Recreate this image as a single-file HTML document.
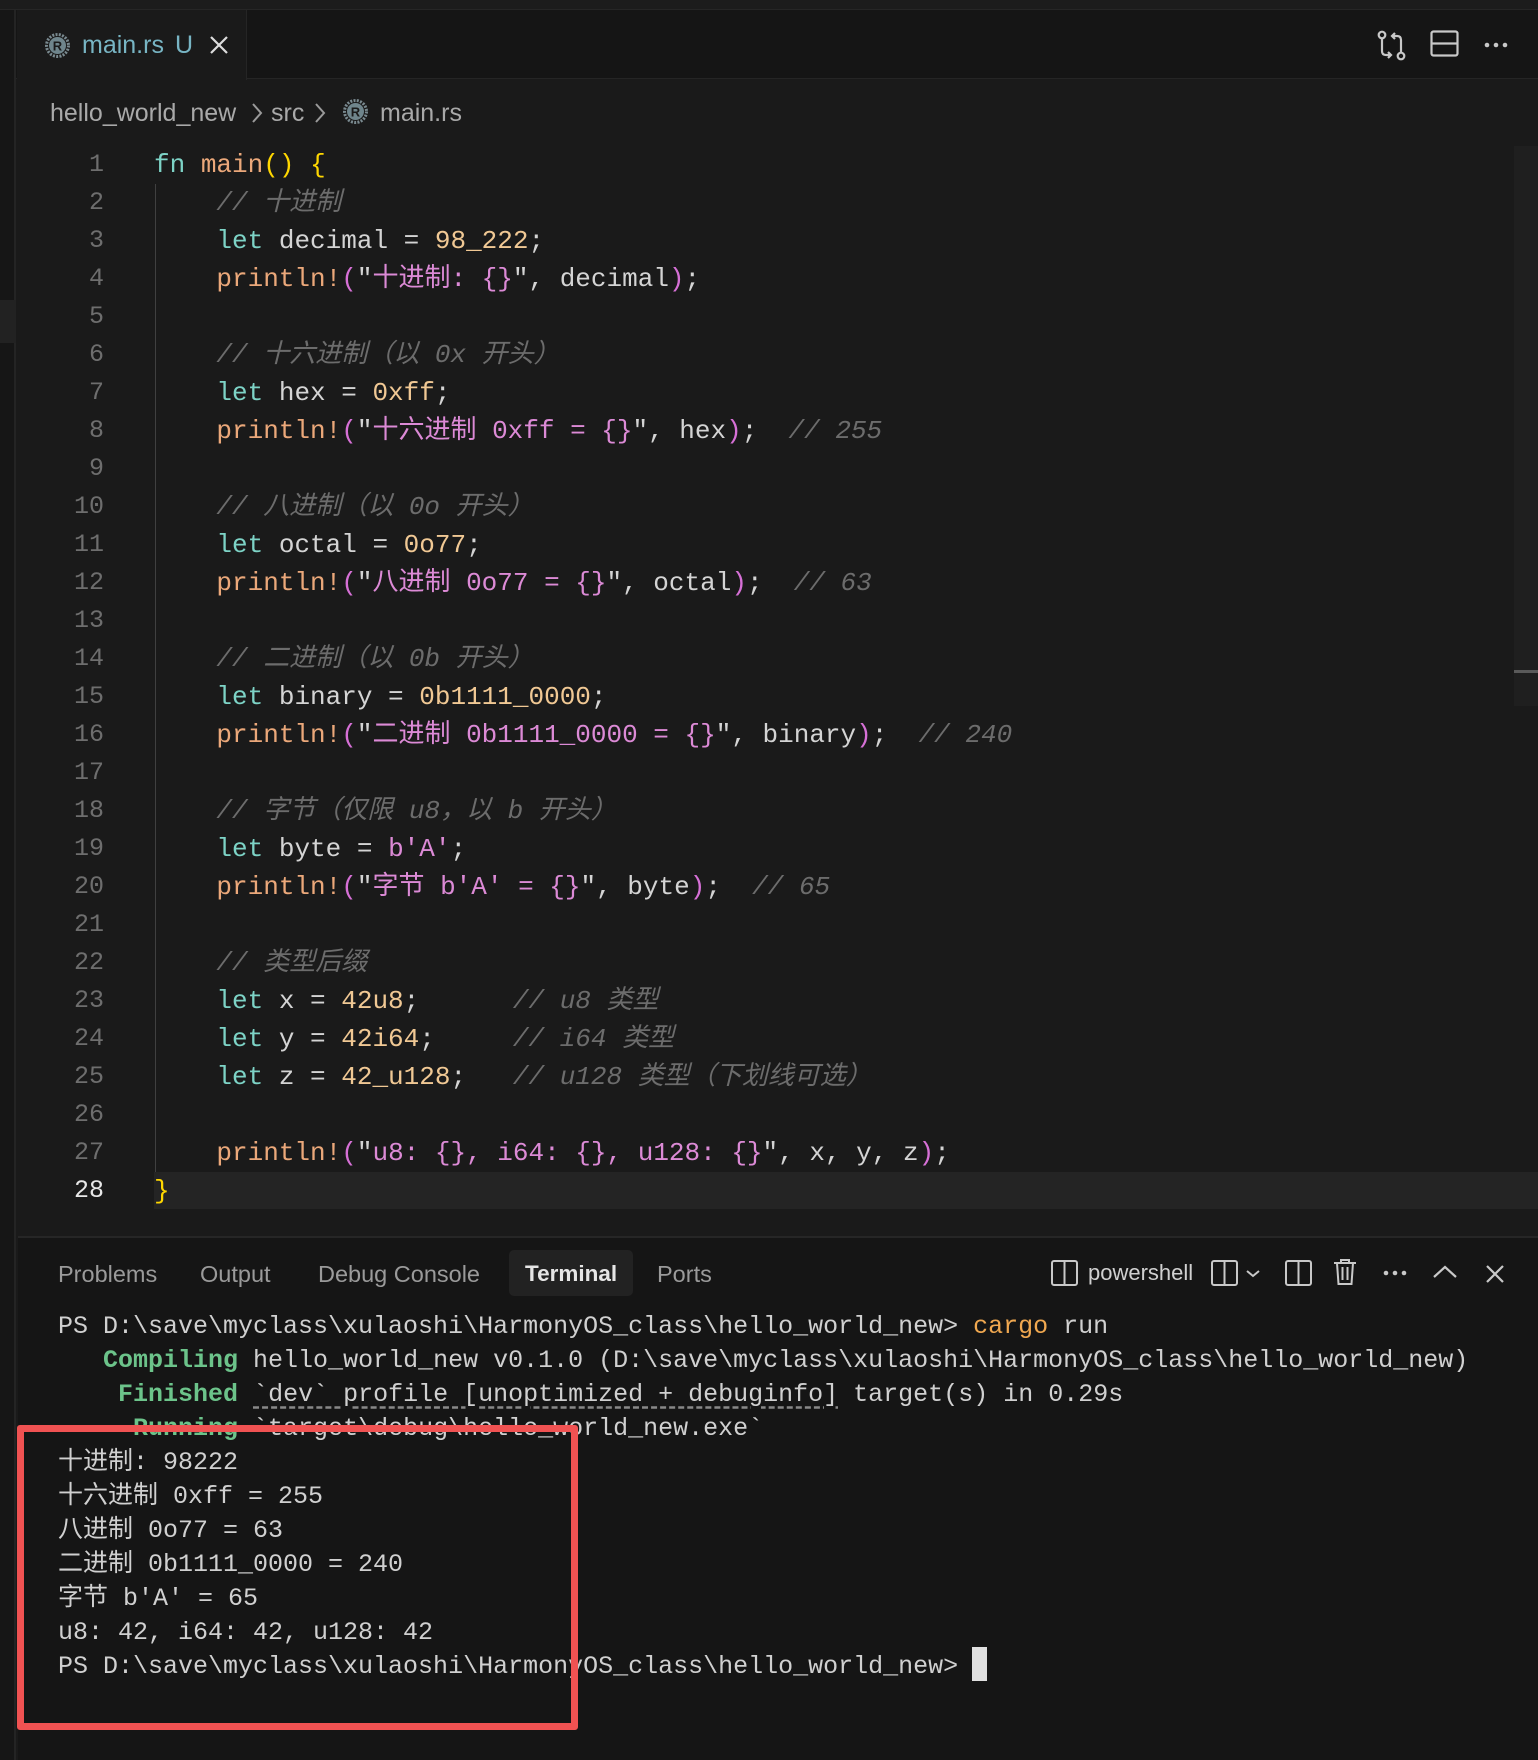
<!DOCTYPE html>
<html><head><meta charset="utf-8"><style>
*{margin:0;padding:0;box-sizing:border-box}
body{width:1538px;height:1760px;background:#1a1a1a;position:relative;overflow:hidden;font-family:"Liberation Sans","Noto Sans CJK SC",sans-serif}
.abs{position:absolute}
.code{position:absolute;left:0;width:1538px;height:38px;line-height:38px;font-family:"Liberation Mono","Noto Sans CJK SC",monospace;font-size:26px;white-space:pre;color:#d4d4d4}
.ln{position:absolute;width:104px;text-align:right;left:0;color:#6e6e6e;font-size:25px}
.tx{position:absolute;left:154px}
.k{color:#7dd3c6}.f{color:#eba87a}.n{color:#f0c894}.s{color:#dc8ad6}.p1{color:#ffd700}.p2{color:#d670d6}.c{color:#6c6c6c;font-style:italic}
.t{position:absolute;left:58px;height:34px;line-height:34px;font-family:"Liberation Mono","Noto Sans CJK SC",monospace;font-size:25px;white-space:pre;color:#d0d0d0}
.g{color:#6cc38a;font-weight:bold}
.ptab{position:absolute;top:1259px;font-size:23.5px;color:#9a9a9a;line-height:30px}
.bc{position:absolute;top:97px;font-size:25px;color:#a9a9a9;line-height:32px;white-space:pre}
</style></head><body>
<div class="abs" style="left:0;top:0;width:1538px;height:10px;background:#1c1c1c;border-bottom:1px solid #262626"></div>
<div class="abs" style="left:0;top:10px;width:1538px;height:69px;background:#151515;border-bottom:1px solid #252525"></div>
<div class="abs" style="left:17px;top:10px;width:230px;height:70px;background:#1a1a1a;border-right:1px solid #252525"></div>
<div class="abs" style="left:0;top:10px;width:16px;height:1750px;background:#161616;border-right:2px solid #242424"></div>
<div class="abs" style="left:0;top:300px;width:16px;height:43px;background:#222"></div>
<svg class="abs" style="left:44px;top:32px" width="27" height="27" viewBox="0 0 27 27"><circle cx="13.5" cy="13.5" r="11" fill="none" stroke="#7a8a90" stroke-width="3" stroke-dasharray="2 1.3"/><circle cx="13.5" cy="13.5" r="8.5" fill="#6f858c"/><text x="13.5" y="18.5" font-size="13" font-weight="bold" text-anchor="middle" fill="#1a1a1a" font-family="Liberation Sans">R</text></svg>
<div class="abs" style="left:82px;top:29px;font-size:25px;color:#78b5c4;line-height:32px">main.rs</div>
<div class="abs" style="left:175px;top:29px;font-size:25px;color:#78b5c4;line-height:32px">U</div>
<svg class="abs" style="left:209px;top:35px" width="20" height="20"><path d="M2 2L18 18M18 2L2 18" stroke="#dcdcdc" stroke-width="2.2"/></svg>
<svg class="abs" style="left:1375px;top:29px" width="34" height="34" viewBox="0 0 34 34" fill="none" stroke="#c8c8c8" stroke-width="2.2"><circle cx="7" cy="6" r="3.3"/><circle cx="26" cy="27" r="3.3"/><path d="M7 9.5V22q0 4 4 4h5M13 23l3 3-3 3M26 23.5V11q0-4-4-4h-5M20 4l-3 3 3 3"/></svg>
<svg class="abs" style="left:1430px;top:30px" width="30" height="28"><rect x="1.5" y="1.5" width="26" height="24" rx="2" fill="none" stroke="#c8c8c8" stroke-width="2.2"/><path d="M1.5 13.5h26" stroke="#c8c8c8" stroke-width="2.2"/></svg>
<svg class="abs" style="left:1484px;top:41px" width="24" height="8"><circle cx="3" cy="4" r="2.3" fill="#c8c8c8"/><circle cx="12" cy="4" r="2.3" fill="#c8c8c8"/><circle cx="21" cy="4" r="2.3" fill="#c8c8c8"/></svg>
<div class="bc" style="left:50px">hello_world_new</div>
<svg class="abs" style="left:250px;top:100px" width="14" height="26" fill="none" stroke="#9a9a9a" stroke-width="2"><path d="M3 4l8 9-8 9"/></svg>
<div class="bc" style="left:271px">src</div>
<svg class="abs" style="left:313px;top:100px" width="14" height="26" fill="none" stroke="#9a9a9a" stroke-width="2"><path d="M3 4l8 9-8 9"/></svg>
<svg class="abs" style="left:342px;top:98px" width="27" height="27" viewBox="0 0 27 27"><circle cx="13.5" cy="13.5" r="11" fill="none" stroke="#7a8a90" stroke-width="3" stroke-dasharray="2 1.3"/><circle cx="13.5" cy="13.5" r="8.5" fill="#6f858c"/><text x="13.5" y="18.5" font-size="13" font-weight="bold" text-anchor="middle" fill="#1a1a1a" font-family="Liberation Sans">R</text></svg>
<div class="bc" style="left:380px">main.rs</div>
<div class="abs" style="left:1514px;top:146px;width:24px;height:560px;background:#1f1f1f"></div>
<div class="abs" style="left:1514px;top:670px;width:24px;height:3px;background:#5a5a5a"></div>
<div class="abs" style="left:155px;top:184px;width:1px;height:988px;background:#404040"></div>
<div class="abs" style="left:154px;top:1172px;width:1384px;height:37px;background:#242424"></div>

<div class="code" style="top:146px"><span class="ln">1</span><span class="tx"><span class="k">fn</span> <span class="f">main</span><span class="p1">()</span> <span class="p1">{</span></span></div>
<div class="code" style="top:184px"><span class="ln">2</span><span class="tx">    <span class="c">// 十进制</span></span></div>
<div class="code" style="top:222px"><span class="ln">3</span><span class="tx">    <span class="k">let</span> decimal = <span class="n">98_222</span>;</span></div>
<div class="code" style="top:260px"><span class="ln">4</span><span class="tx">    <span class="f">println!</span><span class="p2">(</span>"<span class="s">十进制: {}</span>", decimal<span class="p2">)</span>;</span></div>
<div class="code" style="top:298px"><span class="ln">5</span></div>
<div class="code" style="top:336px"><span class="ln">6</span><span class="tx">    <span class="c">// 十六进制（以 0x 开头）</span></span></div>
<div class="code" style="top:374px"><span class="ln">7</span><span class="tx">    <span class="k">let</span> hex = <span class="n">0xff</span>;</span></div>
<div class="code" style="top:412px"><span class="ln">8</span><span class="tx">    <span class="f">println!</span><span class="p2">(</span>"<span class="s">十六进制 0xff = {}</span>", hex<span class="p2">)</span>;  <span class="c">// 255</span></span></div>
<div class="code" style="top:450px"><span class="ln">9</span></div>
<div class="code" style="top:488px"><span class="ln">10</span><span class="tx">    <span class="c">// 八进制（以 0o 开头）</span></span></div>
<div class="code" style="top:526px"><span class="ln">11</span><span class="tx">    <span class="k">let</span> octal = <span class="n">0o77</span>;</span></div>
<div class="code" style="top:564px"><span class="ln">12</span><span class="tx">    <span class="f">println!</span><span class="p2">(</span>"<span class="s">八进制 0o77 = {}</span>", octal<span class="p2">)</span>;  <span class="c">// 63</span></span></div>
<div class="code" style="top:602px"><span class="ln">13</span></div>
<div class="code" style="top:640px"><span class="ln">14</span><span class="tx">    <span class="c">// 二进制（以 0b 开头）</span></span></div>
<div class="code" style="top:678px"><span class="ln">15</span><span class="tx">    <span class="k">let</span> binary = <span class="n">0b1111_0000</span>;</span></div>
<div class="code" style="top:716px"><span class="ln">16</span><span class="tx">    <span class="f">println!</span><span class="p2">(</span>"<span class="s">二进制 0b1111_0000 = {}</span>", binary<span class="p2">)</span>;  <span class="c">// 240</span></span></div>
<div class="code" style="top:754px"><span class="ln">17</span></div>
<div class="code" style="top:792px"><span class="ln">18</span><span class="tx">    <span class="c">// 字节（仅限 u8，以 b 开头）</span></span></div>
<div class="code" style="top:830px"><span class="ln">19</span><span class="tx">    <span class="k">let</span> byte = <span class="s">b'A'</span>;</span></div>
<div class="code" style="top:868px"><span class="ln">20</span><span class="tx">    <span class="f">println!</span><span class="p2">(</span>"<span class="s">字节 b'A' = {}</span>", byte<span class="p2">)</span>;  <span class="c">// 65</span></span></div>
<div class="code" style="top:906px"><span class="ln">21</span></div>
<div class="code" style="top:944px"><span class="ln">22</span><span class="tx">    <span class="c">// 类型后缀</span></span></div>
<div class="code" style="top:982px"><span class="ln">23</span><span class="tx">    <span class="k">let</span> x = <span class="n">42u8</span>;      <span class="c">// u8 类型</span></span></div>
<div class="code" style="top:1020px"><span class="ln">24</span><span class="tx">    <span class="k">let</span> y = <span class="n">42i64</span>;     <span class="c">// i64 类型</span></span></div>
<div class="code" style="top:1058px"><span class="ln">25</span><span class="tx">    <span class="k">let</span> z = <span class="n">42_u128</span>;   <span class="c">// u128 类型（下划线可选）</span></span></div>
<div class="code" style="top:1096px"><span class="ln">26</span></div>
<div class="code" style="top:1134px"><span class="ln">27</span><span class="tx">    <span class="f">println!</span><span class="p2">(</span>"<span class="s">u8: {}, i64: {}, u128: {}</span>", x, y, z<span class="p2">)</span>;</span></div>
<div class="code" style="top:1172px"><span class="ln" style="color:#e8e8e8">28</span><span class="tx"><span class="p1">}</span></span></div>

<div class="abs" style="left:18px;top:1236px;width:1520px;height:524px;background:#151515;border-top:2px solid #262626"></div>
<div class="ptab" style="left:58px">Problems</div>
<div class="ptab" style="left:200px">Output</div>
<div class="ptab" style="left:318px">Debug Console</div>
<div class="abs" style="left:509px;top:1250px;width:124px;height:46px;background:#222;border-radius:5px"></div>
<div class="ptab" style="left:525px;color:#e6e6e6;font-weight:bold;font-size:22.5px">Terminal</div>
<div class="ptab" style="left:657px">Ports</div>
<svg class="abs" style="left:1050px;top:1258px" width="30" height="30" fill="none" stroke="#c8c8c8" stroke-width="2"><rect x="2" y="3" width="25" height="24" rx="2"/><path d="M14.5 3v24"/></svg>
<div class="abs" style="left:1088px;top:1258px;font-size:22px;color:#d0d0d0;line-height:30px">powershell</div>
<svg class="abs" style="left:1210px;top:1258px" width="54" height="30" fill="none" stroke="#c8c8c8" stroke-width="2"><rect x="2" y="3" width="25" height="24" rx="2"/><path d="M14.5 3v24M37 13l6 5 6-5"/></svg>
<svg class="abs" style="left:1284px;top:1258px" width="30" height="30" fill="none" stroke="#c8c8c8" stroke-width="2"><rect x="2" y="3" width="25" height="24" rx="2"/><path d="M14.5 3v24"/></svg>
<svg class="abs" style="left:1333px;top:1257px" width="24" height="30" fill="none" stroke="#c8c8c8" stroke-width="2"><path d="M1 6h22M8 6V3h8v3M4 6l1.5 21h13L20 6M9.5 10v13M14.5 10v13"/></svg>
<svg class="abs" style="left:1383px;top:1269px" width="24" height="8"><circle cx="3" cy="4" r="2.3" fill="#c8c8c8"/><circle cx="12" cy="4" r="2.3" fill="#c8c8c8"/><circle cx="21" cy="4" r="2.3" fill="#c8c8c8"/></svg>
<svg class="abs" style="left:1432px;top:1262px" width="26" height="20" fill="none" stroke="#c8c8c8" stroke-width="2.2"><path d="M2 15L13 5l11 10"/></svg>
<svg class="abs" style="left:1485px;top:1264px" width="20" height="20"><path d="M2 2L18 18M18 2L2 18" stroke="#c8c8c8" stroke-width="2.2"/></svg>

<div class="t" style="top:1310px">PS D:\save\myclass\xulaoshi\HarmonyOS_class\hello_world_new&gt; <span style="color:#f0a850">cargo</span> run</div>
<div class="t" style="top:1344px">   <span class="g">Compiling</span> hello_world_new v0.1.0 (D:\save\myclass\xulaoshi\HarmonyOS_class\hello_world_new)</div>
<div class="t" style="top:1378px">    <span class="g">Finished</span> <span style="text-decoration:underline dashed #888;text-underline-offset:5px">`dev` profile [unoptimized + debuginfo]</span> target(s) in 0.29s</div>
<div class="t" style="top:1412px">     <span class="g">Running</span> `target\debug\hello_world_new.exe`</div>
<div class="t" style="top:1446px">十进制: 98222</div>
<div class="t" style="top:1480px">十六进制 0xff = 255</div>
<div class="t" style="top:1514px">八进制 0o77 = 63</div>
<div class="t" style="top:1548px">二进制 0b1111_0000 = 240</div>
<div class="t" style="top:1582px">字节 b'A' = 65</div>
<div class="t" style="top:1616px">u8: 42, i64: 42, u128: 42</div>
<div class="t" style="top:1650px">PS D:\save\myclass\xulaoshi\HarmonyOS_class\hello_world_new&gt; </div>
<div class="abs" style="left:972px;top:1647px;width:15px;height:34px;background:#e0e0e0"></div>
<div class="abs" style="left:17px;top:1425px;width:561px;height:305px;border:7px solid #f05252;border-radius:3px"></div>
</body></html>
